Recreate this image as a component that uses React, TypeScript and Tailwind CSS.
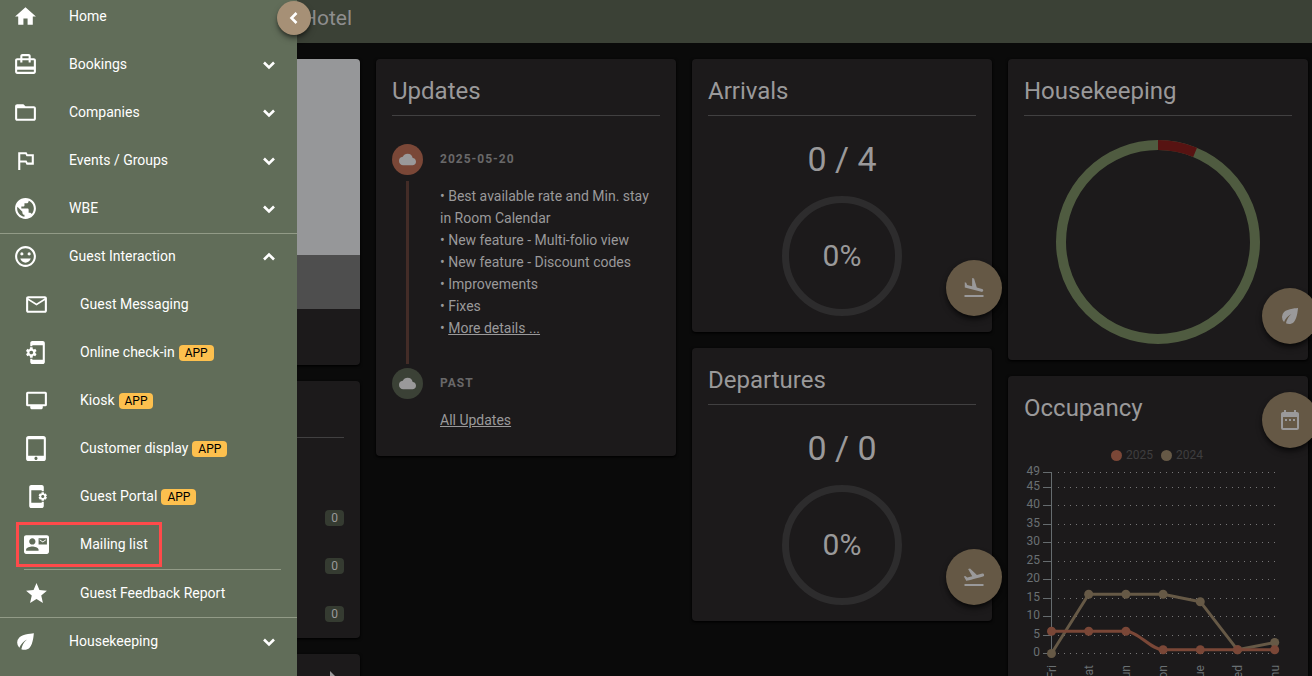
import type { ReactNode } from 'react';
import type { IconType } from 'react-icons';
import {
  MdAppSettingsAlt,
  MdCardTravel,
  MdCloud,
  MdContactMail,
  MdDateRange,
  MdEco,
  MdFlightLand,
  MdFlightTakeoff,
  MdFolderOpen,
  MdGrade,
  MdHome,
  MdMailOutline,
  MdOutlineEmojiEmotions,
  MdOutlinedFlag,
  MdPhonelinkSetup,
  MdPublic,
  MdTabletMac,
} from 'react-icons/md';

function KioskIcon({ className }: { className?: string }) {
  return (
    <svg viewBox="0 0 24 24" fill="currentColor" className={className} aria-hidden="true">
      <path
        fillRule="evenodd"
        d="M3.5 3.5h17A1.5 1.5 0 0 1 22 5v11a1.5 1.5 0 0 1-1.5 1.5H18v2l-1 1H7l-1-1v-2H3.500A1.5 1.5 0 0 1 2 16V5a1.5 1.5 0 0 1 1.5-1.500ZM4 5.500v10h16v-10H4Z"
      />
    </svg>
  );
}

const chevronPaths = {
  down: 'M7 9.500 12 14.500 17 9.500',
  up: 'M7 14.500 12 9.500 17 14.500',
  left: 'M14.500 7 9.500 12 14.500 17',
};

function Chevron({ direction }: { direction: keyof typeof chevronPaths }) {
  return (
    <svg
      viewBox="0 0 24 24"
      fill="none"
      stroke="currentColor"
      strokeWidth="2.6"
      className="size-6"
      aria-hidden="true"
    >
      <path d={chevronPaths[direction]} />
    </svg>
  );
}

interface NavItem {
  label: string;
  icon: IconType | typeof KioskIcon;
  app?: boolean;
}

const mainItems: NavItem[] = [
  { label: 'Bookings', icon: MdCardTravel },
  { label: 'Companies', icon: MdFolderOpen },
  { label: 'Events / Groups', icon: MdOutlinedFlag },
  { label: 'WBE', icon: MdPublic },
];

const guestItems: NavItem[] = [
  { label: 'Guest Messaging', icon: MdMailOutline },
  { label: 'Online check-in', icon: MdPhonelinkSetup, app: true },
  { label: 'Kiosk', icon: KioskIcon, app: true },
  { label: 'Customer display', icon: MdTabletMac, app: true },
  { label: 'Guest Portal', icon: MdAppSettingsAlt, app: true },
];

function GroupButton({ item, open = false }: { item: NavItem; open?: boolean }) {
  const Icon = item.icon;
  return (
    <button
      type="button"
      aria-expanded={open}
      className="flex h-full w-full items-center pr-4 pb-px pl-[13px] text-left"
    >
      <Icon className="size-[25px]" />
      <span className="ml-[31px] flex-1 pb-px">{item.label}</span>
      <Chevron direction={open ? 'up' : 'down'} />
    </button>
  );
}

function SubLink({ item }: { item: NavItem }) {
  const Icon = item.icon;
  return (
    <a href="#" className="flex h-full items-center pb-px pl-6">
      <Icon className="size-[25px]" />
      <span className="ml-[31px] pb-px">{item.label}</span>
      {item.app && (
        <span className="ml-1 rounded bg-[#fdc04e] px-1.5 text-xs leading-4 font-normal text-black">
          APP
        </span>
      )}
    </a>
  );
}

function Sidebar() {
  return (
    <aside className="fixed inset-y-0 left-0 z-20 w-[297px] bg-[#616d59] text-sm text-white">
      {/* The list is scrolled a few pixels past its top */}
      <nav className="h-full overflow-hidden">
        <ul className="-mt-[7px]">
          <li className="h-12">
            <a href="#" className="flex h-full items-center pb-px pl-[13px]">
              <MdHome className="size-[25px]" />
              <span className="ml-[31px] pb-px">Home</span>
            </a>
          </li>
          {mainItems.map((item) => (
            <li key={item.label} className="h-12">
              <GroupButton item={item} />
            </li>
          ))}
          <li className="h-12 shadow-[inset_0_1px_#929b87]">
            <GroupButton item={{ label: 'Guest Interaction', icon: MdOutlineEmojiEmotions }} open />
          </li>
          {guestItems.map((item) => (
            <li key={item.label} className="h-12">
              <SubLink item={item} />
            </li>
          ))}
          <li className="flex h-12 items-center pb-px pl-4">
            <a
              href="#"
              aria-current="page"
              className="flex h-[45px] items-center border-[3px] border-[#ff4a4a] pr-[11px] pl-[5px]"
            >
              <MdContactMail className="size-[25px]" />
              <span className="ml-[31px] pb-px">Mailing list</span>
            </a>
          </li>
          <li className="mr-4 ml-6 h-px bg-[#929b87]" role="separator" />
          <li className="h-12 shadow-[inset_0_-1px_#929b87]">
            <SubLink item={{ label: 'Guest Feedback Report', icon: MdGrade }} />
          </li>
          <li className="h-12">
            <GroupButton item={{ label: 'Housekeeping', icon: MdEco }} />
          </li>
        </ul>
      </nav>
      <button
        type="button"
        aria-label="Collapse menu"
        className="absolute top-px -right-3.5 flex size-[34px] items-center justify-center rounded-full bg-[#a69076] shadow-md shadow-black/50"
      >
        <Chevron direction="left" />
      </button>
    </aside>
  );
}

function Card({ className = '', children }: { className?: string; children?: ReactNode }) {
  return (
    <section className={`relative rounded bg-[#1c1a1b] shadow-sm shadow-black ${className}`}>
      {children}
    </section>
  );
}

function CardTitle({ children }: { children: ReactNode }) {
  return <h2 className="border-b border-[#414041] pb-2 text-2xl leading-8">{children}</h2>;
}

function Fab({ icon: Icon, label, className }: { icon: IconType; label: string; className: string }) {
  return (
    <button
      type="button"
      aria-label={label}
      className={`absolute -right-2.5 flex size-14 items-center justify-center rounded-full bg-[#655845] shadow-md shadow-black/60 ${className}`}
    >
      <Icon className="size-6" />
    </button>
  );
}

function UpdatesCard() {
  return (
    <Card className="px-4 pt-4 pb-[25px]">
      <CardTitle>Updates</CardTitle>
      <ol className="mt-7 text-sm leading-[22px]">
        <li className="flex gap-[17px]">
          <div className="flex flex-col items-center">
            <span className="flex size-[31px] items-center justify-center rounded-full bg-[#7a4737]">
              <MdCloud className="size-[17px]" />
            </span>
            <span className="mt-1.5 mb-1 w-[3px] flex-1 bg-[#432c27]" />
          </div>
          <div className="flex-1 pb-[29px]">
            <h3 className="text-xs leading-[31px] font-bold tracking-[1px] text-[#696869]">2025-05-20</h3>
            <div className="mt-2.5">
              <p>• Best available rate and Min. stay in Room Calendar</p>
              <p>• New feature - Multi-folio view</p>
              <p>• New feature - Discount codes</p>
              <p>• Improvements</p>
              <p>• Fixes</p>
              <p>
                •{' '}
                <a href="#" className="underline">
                  More details ...
                </a>
              </p>
            </div>
          </div>
        </li>
        <li className="flex gap-[17px]">
          <span className="flex size-[31px] items-center justify-center rounded-full bg-[#3b4136]">
            <MdCloud className="size-[17px]" />
          </span>
          <div>
            <h3 className="text-xs leading-[31px] font-bold tracking-[1px] text-[#696869]">PAST</h3>
            <a href="#" className="mt-2.5 block underline">
              All Updates
            </a>
          </div>
        </li>
      </ol>
    </Card>
  );
}

function ProgressCard({ title, count, icon }: { title: string; count: string; icon: IconType }) {
  return (
    <Card className="p-4">
      <CardTitle>{title}</CardTitle>
      <p className="mt-[23px] text-center text-[34px] leading-10">{count}</p>
      <div className="mx-auto mt-[17px] flex size-[120px] items-center justify-center rounded-full border-[7px] border-[#2d2c2d] text-3xl">
        0%
      </div>
      <Fab icon={icon} label={title} className="bottom-4" />
    </Card>
  );
}

function HousekeepingCard() {
  return (
    <Card className="p-4">
      <CardTitle>Housekeeping</CardTitle>
      <svg viewBox="0 0 204 204" className="mx-auto mt-6 size-[204px]" role="img" aria-label="Room status">
        <g fill="none" strokeWidth="10" transform="rotate(-90 102 102)">
          <circle cx="102" cy="102" r="97" stroke="#4f5b40" />
          <circle cx="102" cy="102" r="97" stroke="#571312" pathLength="100" strokeDasharray="6.25 93.75" />
        </g>
      </svg>
      <Fab icon={MdEco} label="Housekeeping" className="bottom-4" />
    </Card>
  );
}

const days = ['Fri', 'Sat', 'Sun', 'Mon', 'Tue', 'Wed', 'Thu'];
const ticks = [0, 5, 10, 15, 20, 25, 30, 35, 40, 45, 49];
const current = [6, 6, 6, 1, 1, 1, 1];
const previous = [0, 16, 16, 16, 14, 1, 3];

const dayX = (i: number) => 43.5 + i * 37.2;
const valueY = (v: number) => 189.5 - v * 3.7;

function OccupancyChart() {
  return (
    <svg viewBox="0 0 300 230" className="mt-px w-full text-xs" role="img" aria-label="Occupancy by day">
      {ticks.map((t) => {
        const y = Math.floor(valueY(t)) + 0.5;
        return (
          <g key={t}>
            <line x1="50" x2="268" y1={y} y2={y} stroke="#777677" strokeDasharray="1 5" />
            <line x1="35" x2="44" y1={y} y2={y} stroke="#666c6f" />
            <text x="32" y={y + 2.5} textAnchor="end" fill="#6a7073">
              {t}
            </text>
          </g>
        );
      })}
      <line x1="43.5" x2="43.5" y1="8" y2="190" stroke="#666c6f" />
      {days.map((day, i) => (
        <text
          key={day}
          transform={`translate(${dayX(i) + 4} 201) rotate(-90)`}
          textAnchor="end"
          fill="#6a7073"
        >
          {day}
        </text>
      ))}
      <polyline
        points={previous.map((v, i) => `${dayX(i)},${valueY(v)}`).join(' ')}
        fill="none"
        stroke="#665946"
        strokeWidth="3"
        strokeLinejoin="round"
      />
      <path
        d="M43.5 167.3H117.9C130 167.3 143 185.8 155.1 185.8H266.7"
        fill="none"
        stroke="#7a4737"
        strokeWidth="3"
      />
      {previous.map((v, i) => (
        <circle key={i} cx={dayX(i)} cy={valueY(v)} r="4.5" fill="#665946" />
      ))}
      {current.map((v, i) => (
        <circle key={i} cx={dayX(i)} cy={valueY(v)} r="4.5" fill="#7a4737" />
      ))}
    </svg>
  );
}

function OccupancyCard() {
  return (
    <Card className="pt-4">
      <h2 className="px-4 text-2xl leading-8">Occupancy</h2>
      <ul className="mt-[23px] flex justify-center gap-2 pr-0.5 text-xs leading-4 text-[#3f3e3f]">
        <li className="flex items-center gap-1">
          <span className="size-[11px] rounded-full bg-[#7a4737]" />
          2025
        </li>
        <li className="flex items-center gap-1">
          <span className="size-[11px] rounded-full bg-[#665946]" />
          2024
        </li>
      </ul>
      <OccupancyChart />
      <Fab icon={MdDateRange} label="Open calendar" className="top-4" />
    </Card>
  );
}

function HotelColumn() {
  return (
    <div className="flex flex-col gap-4">
      <Card className="overflow-hidden pb-14">
        <div className="h-[196px] bg-[#969799]" />
        <div className="h-[54px] bg-[#4e4e4e]" />
      </Card>
      <Card className="px-4 pt-14 pb-4">
        <ul className="flex flex-col items-end gap-8 border-t border-[#414041] pt-[72px] text-xs leading-4">
          {['reservations', 'messages', 'tasks'].map((key) => (
            <li key={key} className="rounded bg-[#353b31] px-1.5">
              0
            </li>
          ))}
        </ul>
      </Card>
      <Card className="flex justify-end px-4 pt-4 pb-10">
        <svg viewBox="0 0 12 12" fill="currentColor" className="mr-1 size-3" aria-hidden="true">
          <path d="M2 1 9 8H2Z" />
        </svg>
      </Card>
    </div>
  );
}

export default function App() {
  return (
    <div className="h-screen overflow-hidden bg-[#0a0a0a] font-[Roboto,sans-serif] text-[#9a999a]">
      <Sidebar />
      <header className="flex h-[43px] items-center bg-[#3b4136] pb-2 pl-[302px]">
        <h1 className="text-[21px] leading-7 text-[#8e8e8e]">Hotel</h1>
      </header>
      <main className="grid grid-cols-4 items-start gap-4 pt-4 pr-1 pl-[60px]">
        <HotelColumn />
        <UpdatesCard />
        <div className="flex flex-col gap-4">
          <ProgressCard title="Arrivals" count="0 / 4" icon={MdFlightLand} />
          <ProgressCard title="Departures" count="0 / 0" icon={MdFlightTakeoff} />
        </div>
        <div className="flex flex-col gap-4">
          <HousekeepingCard />
          <OccupancyCard />
        </div>
      </main>
    </div>
  );
}
